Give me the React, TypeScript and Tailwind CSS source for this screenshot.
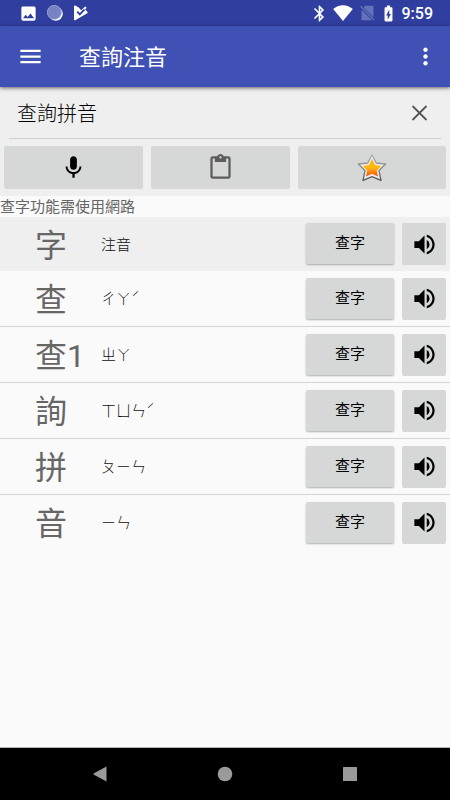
import { useState } from "react";
import {
  MdBatteryChargingFull,
  MdBluetooth,
  MdContentPaste,
  MdImage,
  MdMenu,
  MdMic,
  MdMoreVert,
  MdVolumeUp,
} from "react-icons/md";

const rows = [
  { char: "查", zhuyin: "ㄔㄚˊ" },
  { char: "查1", zhuyin: "ㄓㄚ" },
  { char: "詢", zhuyin: "ㄒㄩㄣˊ" },
  { char: "拼", zhuyin: "ㄆㄧㄣ" },
  { char: "音", zhuyin: "ㄧㄣ" },
];

function StatusBar() {
  return (
    <div className="flex h-[26px] items-center bg-[#303f9f] pl-[19px] pr-[17px] text-white">
      <MdImage size={19} />
      <svg className="ml-2" width="18" height="18" viewBox="0 0 18 18">
        <circle cx="9.8" cy="9.8" r="7" fill="#fff" />
        <circle cx="8.3" cy="8.3" r="7.3" fill="#7480c2" />
        <circle cx="8.3" cy="8.3" r="6.8" fill="none" stroke="#b3bae0" strokeDasharray="1.5 1.2" />
        <circle cx="8.3" cy="8.3" r="4" fill="none" stroke="#8a95cd" strokeDasharray="1 1" />
      </svg>
      <svg className="ml-[10px]" width="14" height="16" viewBox="0 0 14 16">
        <path d="M0 1.5Q0 .3 1.2.6L4.8 2.5L7 5.2L9.5 3.2L11.5 4.8L13.2 6.8Q14.2 7.5 13.2 8.2L1.2 15.2Q0 15.6 0 14.4Z" fill="#fff" />
        <path d="M3.2 6.6L5.8 9.4L11 3.8" fill="none" stroke="#303f9f" strokeWidth="1.8" />
        <path d="M9 3.6L11.2 1.4L12.6 2.8L10.8 4.8Z" fill="#fff" />
      </svg>
      <div className="ml-auto flex items-center">
        <MdBluetooth size={19} />
        <svg className="ml-1" width="20" height="16" viewBox="0 0 20 16">
          <path d="M10 16L.2 4C3 1.5 6.3 .2 10 .2S17 1.5 19.8 4Z" fill="#fff" />
        </svg>
        <svg className="ml-[7px]" width="15" height="16" viewBox="0 0 15 16">
          <path d="M5.2 .8H12.5Q13.5 .8 13.5 1.8V12.2L3.5 2.5Z" fill="#6571ba" />
          <path d="M1.5 4.8L12 15.3H2.5Q1.5 15.3 1.5 14.3Z" fill="#6571ba" />
          <path d="M.6 1.2L14 15" stroke="#6571ba" strokeWidth="1.3" />
        </svg>
        <MdBatteryChargingFull className="ml-1" size={19} />
        <span className="ml-1 pt-0.5 font-[Roboto] text-base font-medium">9:59</span>
      </div>
    </div>
  );
}

function StarIcon() {
  return (
    <svg width="30" height="30" viewBox="0 0 30 30">
      <defs>
        <linearGradient id="star-fill" x1="0" y1="0" x2="0" y2="1">
          <stop offset="0" stopColor="#f8b400" />
          <stop offset="0.5" stopColor="#ffb90f" />
          <stop offset="1" stopColor="#fb4c10" />
        </linearGradient>
        <linearGradient id="star-edge" x1="0" y1="0" x2="0" y2="1">
          <stop offset="0" stopColor="#b5b5b5" />
          <stop offset="1" stopColor="#555" />
        </linearGradient>
      </defs>
      <path
        d="M15 1.8L19.2 10L28.6 11L22 17.6L24 27.4L15 23.6L6 27.4L8 17.6L1.4 11L10.8 10Z"
        fill="#ececec"
        stroke="url(#star-edge)"
        strokeWidth="1.3"
        strokeLinejoin="round"
      />
      <path
        d="M15 6L17.8 12.1L24.4 13L19.8 17.4L21 23.4L15 20.8L9 23.4L10.2 17.4L5.6 13L12.2 12.1Z"
        fill="url(#star-fill)"
      />
    </svg>
  );
}

function RowButtons({ char }: { char: string }) {
  return (
    <div className="flex items-start justify-end gap-2 pr-1">
      <button className="h-[41px] w-[88px] rounded-xs bg-[#d6d7d7] text-[15px] text-black shadow-[0_1px_2px_rgba(0,0,0,0.3)]">
        查字
      </button>
      <button
        className="flex h-[42px] w-11 items-center justify-center rounded-xs bg-[#d6d7d7] text-black"
        aria-label={`${char} 發音`}
      >
        <MdVolumeUp size={27} />
      </button>
    </div>
  );
}

export default function App() {
  const [query, setQuery] = useState("查詢拼音");

  return (
    <div className="flex min-h-screen flex-col bg-[#fafafa] font-[Roboto,'Noto_Sans_CJK_TC',sans-serif]">
      <StatusBar />
      <header className="relative flex h-[61px] items-center bg-[#3f51b5] pl-[17px] pr-[11px] text-white shadow-[0_1px_4px_rgba(0,0,0,0.6)]">
        <button aria-label="選單">
          <MdMenu size={27} />
        </button>
        <h1 className="ml-[35px] pt-0.5 text-[22px] leading-7">查詢注音</h1>
        <button className="ml-auto" aria-label="更多">
          <MdMoreVert size={27} />
        </button>
      </header>

      <section className="bg-[#efefef] pb-[7px]">
        <div className="mx-[9px] flex h-[52px] items-center border-b border-[#cfcfcf] px-2">
          <input
            className="min-w-0 flex-1 bg-transparent pt-[3px] text-xl font-light text-black outline-none"
            aria-label="查詢"
            value={query}
            onChange={(e) => setQuery(e.target.value)}
          />
          <button className="text-[#555]" aria-label="清除" onClick={() => setQuery("")}>
            <svg width="27" height="27" viewBox="0 0 27 27">
              <path d="M6.5 7L20.500 21M20.500 7L6.500 21" stroke="currentColor" strokeWidth="1.800" />
            </svg>
          </button>
        </div>
        <div className="mt-[7px] grid grid-cols-[139fr_139fr_148fr] gap-2 px-1">
          <button className="flex h-[43px] items-center justify-center rounded-xs bg-[#d6d7d7]" aria-label="語音輸入">
            <MdMic size={27} />
          </button>
          <button
            className="flex h-[43px] items-center justify-center rounded-xs bg-[#d6d7d7] text-[#5c5c5c]"
            aria-label="貼上"
          >
            <MdContentPaste size={27} />
          </button>
          <button className="flex h-[43px] items-center justify-center rounded-xs bg-[#d6d7d7]" aria-label="我的最愛">
            <StarIcon />
          </button>
        </div>
      </section>

      <main className="flex-1">
        <p className="pt-0.5 text-[15px] leading-[19px] text-[#666]">查字功能需使用網路</p>
        <table className="w-full border-separate border-spacing-0 text-left">
          <thead>
            <tr className="h-[54px] bg-[#efefef]">
              <th className="w-[101px] p-0 pt-[3px] pl-[35px] text-[32px] leading-10 font-normal text-[#666]">字</th>
              <th className="p-0 pt-0.5 text-[15px] font-light text-[#111]">注音</th>
              <td className="p-0">
                <RowButtons char="字" />
              </td>
            </tr>
          </thead>
          <tbody className="[&>tr>td]:border-b [&>tr>td]:border-[#d5d5d5] [&>tr:last-child>td]:border-transparent">
            {rows.map((row) => (
              <tr key={row.char} className="h-14">
                <td className="p-0 pt-[3px] pl-[35px] text-[32px] leading-10 whitespace-nowrap text-[#666]">{row.char}</td>
                <td className="p-0 pt-0.5 text-[15px] font-light text-[#111]">{row.zhuyin}</td>
                <td className="p-0">
                  <RowButtons char={row.char} />
                </td>
              </tr>
            ))}
          </tbody>
        </table>
      </main>

      <nav className="grid h-[53px] grid-cols-3 items-center border-t border-[#b5b5b5] bg-black px-[38px] text-[#9a9a9a]">
        <button className="flex justify-center" aria-label="返回">
          <svg width="14" height="16" viewBox="0 0 14 16">
            <path d="M13.5 .5V15.5L.5 8.500V7.500Z" fill="currentColor" />
          </svg>
        </button>
        <button className="flex justify-center" aria-label="首頁">
          <svg width="16" height="16" viewBox="0 0 16 16">
            <circle cx="8" cy="8" r="7.3" fill="currentColor" />
          </svg>
        </button>
        <button className="flex justify-center" aria-label="最近使用">
          <svg width="14" height="14" viewBox="0 0 14 14">
            <rect width="14" height="14" rx="0.5" fill="currentColor" />
          </svg>
        </button>
      </nav>
    </div>
  );
}
